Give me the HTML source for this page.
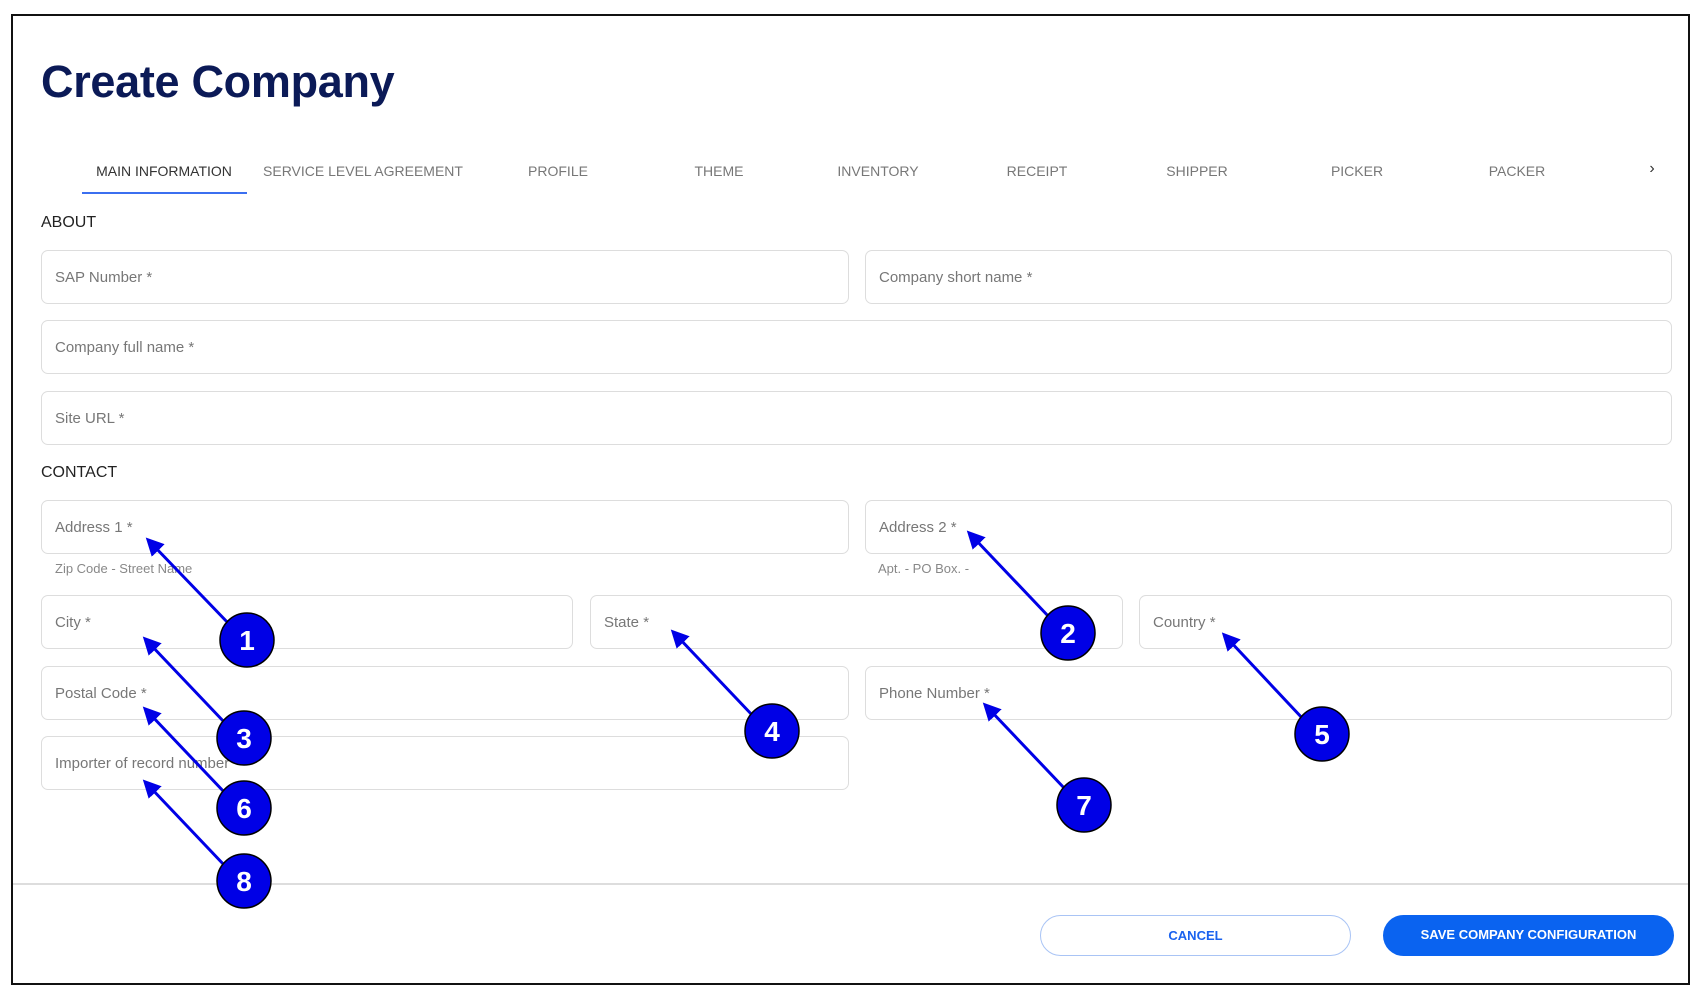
<!DOCTYPE html>
<html><head><meta charset="utf-8"><style>
*{margin:0;padding:0;box-sizing:border-box}
body{width:1700px;height:991px;background:#fff;font-family:"Liberation Sans",sans-serif;position:relative;overflow:hidden}
.frame{position:absolute;left:11px;top:14px;width:1679px;height:971px;border:2.5px solid #111}
.a{position:absolute}
h1{position:absolute;left:41px;top:56px;font-size:45px;font-weight:bold;color:#0b1a57;letter-spacing:-0.3px}
.tab{position:absolute;top:163px;font-size:14px;color:#777;transform:translateX(-50%);white-space:nowrap}
.sec{position:absolute;left:41px;font-size:16px;color:#222}
.in{position:absolute;border:1.5px solid #ddd;border-radius:7px;height:54px}
.in span{position:absolute;left:13px;top:18px;font-size:15px;color:#777}
.help{position:absolute;font-size:13px;color:#888}
.btn{position:absolute;border-radius:22px;font-size:13px;font-weight:bold;text-align:center;line-height:40px;height:41px}
</style></head><body>
<div class="frame"></div>
<h1>Create Company</h1>
<div class="tab" style="left:164px;color:#333">MAIN INFORMATION</div>
<div class="a" style="left:82px;top:192px;width:165px;height:2px;background:#3b6ff0"></div>
<div class="tab" style="left:363px">SERVICE LEVEL AGREEMENT</div>
<div class="tab" style="left:558px">PROFILE</div>
<div class="tab" style="left:719px">THEME</div>
<div class="tab" style="left:878px">INVENTORY</div>
<div class="tab" style="left:1037px">RECEIPT</div>
<div class="tab" style="left:1197px">SHIPPER</div>
<div class="tab" style="left:1357px">PICKER</div>
<div class="tab" style="left:1517px">PACKER</div>
<div class="tab" style="left:1652px;top:160px;color:#333;font-size:16px">›</div>
<div class="sec" style="top:214px">ABOUT</div>
<div class="in" style="left:41px;top:250px;width:808px"><span>SAP Number *</span></div>
<div class="in" style="left:865px;top:250px;width:807px"><span>Company short name *</span></div>
<div class="in" style="left:41px;top:320px;width:1631px"><span>Company full name *</span></div>
<div class="in" style="left:41px;top:391px;width:1631px"><span>Site URL *</span></div>
<div class="sec" style="top:464px">CONTACT</div>
<div class="in" style="left:41px;top:500px;width:808px"><span>Address 1 *</span></div>
<div class="in" style="left:865px;top:500px;width:807px"><span>Address 2 *</span></div>
<div class="help" style="left:55px;top:561px">Zip Code - Street Name</div>
<div class="help" style="left:878px;top:561px">Apt. - PO Box. -</div>
<div class="in" style="left:41px;top:595px;width:532px"><span>City *</span></div>
<div class="in" style="left:590px;top:595px;width:533px"><span>State *</span></div>
<div class="in" style="left:1139px;top:595px;width:533px"><span>Country *</span></div>
<div class="in" style="left:41px;top:666px;width:808px"><span>Postal Code *</span></div>
<div class="in" style="left:865px;top:666px;width:807px"><span>Phone Number *</span></div>
<div class="in" style="left:41px;top:736px;width:808px"><span>Importer of record number *</span></div>
<div class="a" style="left:13px;top:883px;width:1675px;height:2px;background:#ddd"></div>
<div class="btn" style="left:1040px;top:915px;width:311px;border:1.5px solid #a9c4f5;color:#1a62ef">CANCEL</div>
<div class="btn" style="left:1383px;top:915px;width:291px;background:#0a63f0;color:#fff">SAVE COMPANY CONFIGURATION</div>
<svg class="a" style="left:0;top:0" width="1700" height="991" font-family="Liberation Sans" font-weight="bold">
<defs><marker id="h" markerWidth="6" markerHeight="6" refX="3" refY="3" orient="auto"><path d="M0,0L6,3L0,6z" fill="#0000e6"/></marker></defs>
<g stroke="#0000e6" stroke-width="3" marker-end="url(#h)">
<line x1="230" y1="625" x2="152" y2="544"/>
<line x1="1050" y1="618" x2="973" y2="537"/>
<line x1="226" y1="724" x2="149" y2="643"/>
<line x1="754" y1="717" x2="677" y2="636"/>
<line x1="1304" y1="720" x2="1228" y2="639"/>
<line x1="226" y1="794" x2="149" y2="713"/>
<line x1="1066" y1="790" x2="989" y2="709"/>
<line x1="226" y1="867" x2="149" y2="786"/>
</g>
<g fill="#0000e6" stroke="#000" stroke-width="1.5">
<circle cx="247" cy="640" r="27"/><circle cx="1068" cy="633" r="27"/><circle cx="244" cy="738" r="27"/><circle cx="772" cy="731" r="27"/><circle cx="1322" cy="734" r="27"/><circle cx="244" cy="808" r="27"/><circle cx="1084" cy="805" r="27"/><circle cx="244" cy="881" r="27"/>
</g>
<g fill="#fff" font-size="28" text-anchor="middle">
<text x="247" y="650">1</text><text x="1068" y="643">2</text><text x="244" y="748">3</text><text x="772" y="741">4</text><text x="1322" y="744">5</text><text x="244" y="818">6</text><text x="1084" y="815">7</text><text x="244" y="891">8</text>
</g>
</svg>
</body></html>
